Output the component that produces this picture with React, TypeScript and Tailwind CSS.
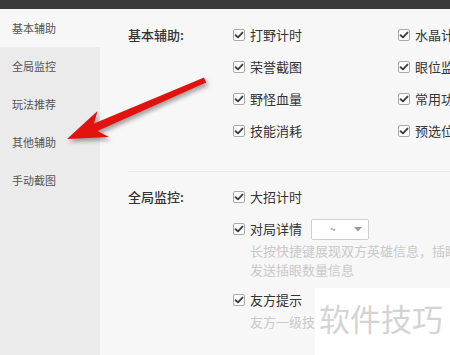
import React from 'react';

const navItems = ['基本辅助', '全局监控', '玩法推荐', '其他辅助', '手动截图'];

function CheckBox() {
  return (
    <span className="flex h-[12px] w-[12px] shrink-0 items-center justify-center rounded-[2px] border border-[#a9a9a9] bg-white">
      <svg width="10" height="10" viewBox="0 0 10 10">
        <path d="M1.6 5.2 L4 7.4 L8.5 2.6" fill="none" stroke="#3f3f3f" strokeWidth="1.9" strokeLinecap="round" strokeLinejoin="round" />
      </svg>
    </span>
  );
}

function Option({ label, children }: { label: string; children?: React.ReactNode }) {
  return (
    <div className="flex h-[32px] items-center whitespace-nowrap">
      <CheckBox />
      <span className="ml-[5px] text-[13px] text-[#333]">{label}</span>
      {children}
    </div>
  );
}

function Hint({ children }: { children: React.ReactNode }) {
  return <div className="pl-[17px] text-[13px] leading-[19px] whitespace-nowrap text-[#c9c9c9]">{children}</div>;
}

export default function App() {
  return (
    <div className="relative h-[355px] w-[450px] overflow-hidden bg-[#f7f7f7] font-['Noto_Sans_CJK_SC',sans-serif]">
      <div className="h-[9px] bg-[#3a3a3a]" />
      <div className="flex h-[346px]">
        <div className="w-[100px] shrink-0 bg-[#ebebeb]">
          {navItems.map((item, i) => (
            <div
              key={item}
              className={`flex h-[38px] items-center pl-[12px] text-[11px] text-[#555] ${i === 0 ? 'bg-[#f7f7f7]' : ''}`}
            >
              {item}
            </div>
          ))}
        </div>

        <div className="min-w-0 flex-1 overflow-hidden pl-[28px] pt-[10px]">
          <div className="flex">
            <div className="flex h-[32px] w-[105px] shrink-0 items-center text-[13px] font-medium text-[#333]">基本辅助:</div>
            <div className="w-[165px] shrink-0">
              <Option label="打野计时" />
              <Option label="荣誉截图" />
              <Option label="野怪血量" />
              <Option label="技能消耗" />
            </div>
            <div className="shrink-0">
              <Option label="水晶计时" />
              <Option label="眼位监控" />
              <Option label="常用功能" />
              <Option label="预选位置" />
            </div>
          </div>

          <div className="mt-[24px] h-px bg-[#e6e6e6]" />

          <div className="flex pt-[9px]">
            <div className="flex h-[32px] w-[105px] shrink-0 items-center text-[13px] font-medium text-[#333]">全局监控:</div>
            <div className="shrink-0">
              <Option label="大招计时" />
              <Option label="对局详情">
                <div className="ml-[9px] flex h-[21px] w-[58px] items-center justify-between rounded-[2px] border border-[#cfcfcf] bg-white pl-[18px] pr-[6px]">
                  <span className="text-[10px] leading-none text-[#777]">~</span>
                  <svg width="8" height="5" viewBox="0 0 8 5">
                    <path d="M0 0 H8 L4 4.5 Z" fill="#9a9a9a" />
                  </svg>
                </div>
              </Option>
              <div className="mt-[-4px]">
                <Hint>长按快捷键展现双方英雄信息，插眼</Hint>
                <Hint>发送插眼数量信息</Hint>
              </div>
              <div className="mt-[5px]">
                <Option label="友方提示" />
              </div>
              <div className="mt-[-4px]">
                <Hint>友方一级技能提示</Hint>
              </div>
            </div>
          </div>
        </div>
      </div>

      <div className="absolute left-[315px] top-[288px] flex h-[67px] w-[135px] items-start bg-white pl-[4px] pt-[10px]">
        <span className="text-[31px] leading-[40px] text-[#d4d4d4]">软件技巧</span>
      </div>

      <svg className="absolute left-0 top-0 drop-shadow-[2px_3px_2px_rgba(0,0,0,0.35)]" width="450" height="355" viewBox="0 0 450 355">
        <polygon
          points="67,139 97.5,111 94,123.6 204,77.6 206.2,82.4 97.4,131 109,137"
          fill="#e2120f"
        />
      </svg>
    </div>
  );
}
